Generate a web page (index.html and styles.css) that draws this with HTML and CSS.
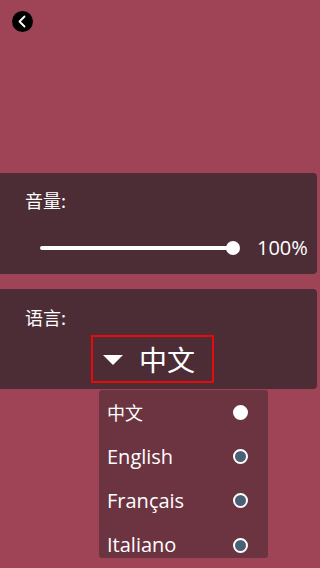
FILE: index.html
```html
<!DOCTYPE html>
<html>
<head>
<meta charset="utf-8">
<link rel="stylesheet" href="styles.css">
</head>
<body>
<div class="screen">
  <div class="top">
    <div class="back">
      <svg width="21" height="21" viewBox="0 0 21 21"><path d="M12.5 5.5 L7.5 10.5 L12.5 15.5" fill="none" stroke="#fff" stroke-width="1.8" stroke-linecap="round" stroke-linejoin="round"/></svg>
    </div>
  </div>
  <div class="panel vol">
    <div class="label">音量:</div>
    <div class="slider-row">
      <div class="slider">
        <div class="track"></div>
        <div class="thumb"></div>
      </div>
      <div class="pct">100%</div>
    </div>
  </div>
  <div class="panel lang">
    <div class="label">语言:</div>
    <div class="select">
      <span class="tri"></span>
      <span class="sel-text">中文</span>
    </div>
  </div>
  <ul class="list">
    <li class="item"><span class="name">中文</span><span class="radio on"></span></li>
    <li class="item"><span class="name">English</span><span class="radio"></span></li>
    <li class="item"><span class="name">Français</span><span class="radio"></span></li>
    <li class="item"><span class="name">Italiano</span><span class="radio"></span></li>
  </ul>
</div>
</body>
</html>
```
FILE: styles.css
```css
html, body {
  margin: 0;
  padding: 0;
}
body {
  background: #9f4356;
  font-family: "Open Sans", "Noto Sans CJK SC", sans-serif;
  color: #fff;
}
.screen {
  width: 320px;
  height: 568px;
  overflow: hidden;
}
.top {
  height: 173px;
  box-sizing: border-box;
  padding: 11px 0 0 12px;
}
.back {
  width: 21px;
  height: 21px;
  border-radius: 50%;
  background: #000;
}
.back svg {
  display: block;
}
.panel {
  width: 317px;
  box-sizing: border-box;
  background: #4d2d35;
  border-radius: 0 4px 4px 0;
  padding-left: 25px;
}
.label {
  font-family: "Noto Sans CJK SC", sans-serif;
  font-size: 18px;
  font-weight: 400;
  line-height: 22px;
  height: 22px;
}
.vol {
  height: 101px;
  padding-top: 16px;
}
.slider-row {
  display: flex;
  align-items: center;
  height: 24px;
  margin-top: 25px;
  margin-left: 15px;
}
.slider {
  position: relative;
  width: 200px;
  height: 14px;
  display: flex;
  align-items: center;
}
.track {
  width: 193px;
  height: 4px;
  background: #fff;
  border-radius: 2px;
}
.thumb {
  position: absolute;
  left: 186px;
  top: 0;
  width: 14px;
  height: 14px;
  border-radius: 50%;
  background: #fff;
}
.pct {
  margin-left: 17px;
  font-size: 20px;
  line-height: 24px;
}
.lang {
  margin-top: 15px;
  height: 100px;
  padding-top: 17px;
}
.select {
  margin-top: 7px;
  margin-left: 66px;
  width: 123px;
  height: 48px;
  box-sizing: border-box;
  border: 2px solid #e80a0a;
  display: flex;
  align-items: center;
  padding-left: 10px;
}
.tri {
  width: 0;
  height: 0;
  border-left: 10.5px solid transparent;
  border-right: 10.5px solid transparent;
  border-top: 10px solid #fff;
  margin-top: 2px;
}
.sel-text {
  margin-left: 16px;
  font-family: "Noto Sans CJK SC", sans-serif;
  font-size: 28px;
  line-height: 40px;
}
.list {
  list-style: none;
  margin: 1px 0 0 99px;
  padding: 0;
  width: 169px;
  height: 168px;
  overflow: hidden;
  background: #6c3441;
  border-radius: 3px;
}
.item {
  height: 44.4px;
  display: flex;
  align-items: center;
  justify-content: space-between;
  padding: 0 20px 0 8px;
}
.name {
  font-size: 20px;
  font-weight: 500;
  line-height: 24px;
}
.item:first-child .name {
  font-family: "Noto Sans CJK SC", sans-serif;
  font-size: 18px;
  font-weight: 400;
}
.radio {
  width: 15px;
  height: 15px;
  box-sizing: border-box;
  border-radius: 50%;
  border: 2px solid #fff;
  background: #4a6074;
}
.radio.on {
  background: #fff;
}
```
